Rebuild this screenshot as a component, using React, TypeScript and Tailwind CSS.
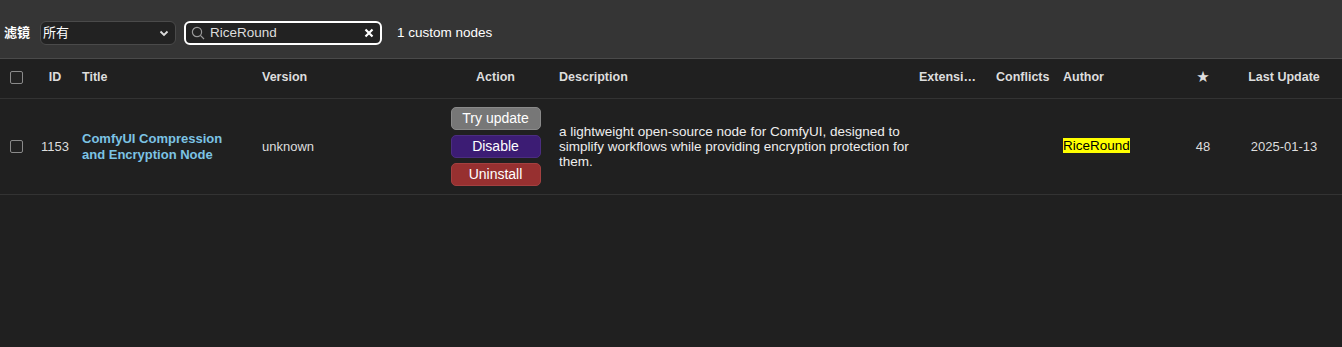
type NodeRow = {
  id: number
  title: string
  version: string
  description: string
  author: string
  stars: number
  lastUpdate: string
}

const ROWS: NodeRow[] = [
  {
    id: 1153,
    title: 'ComfyUI Compression and Encryption Node',
    version: 'unknown',
    description:
      'a lightweight open-source node for ComfyUI, designed to simplify workflows while providing encryption protection for them.',
    author: 'RiceRound',
    stars: 48,
    lastUpdate: '2025-01-13',
  },
]

const COLS =
  'grid grid-cols-[32px_46px_180px_178px_119px_360px_77px_67px_111px_66px_96px_1fr]'

function Checkbox() {
  return <span className="block h-[13px] w-[13px] rounded-[2px] border border-[#8a8a8a] bg-[#222]" />
}

export default function App() {
  return (
    <div
      className="h-[347px] w-full overflow-hidden bg-[#202020] text-[13px] text-[#ddd]"
      style={{ fontFamily: '"Liberation Sans", Arial, "Noto Sans CJK SC", sans-serif' }}
    >
      {/* toolbar */}
      <div className="flex h-[59px] items-center border-b border-[#4a4a4a] bg-[#353535] pl-1 pt-[8px]">
        <span className="font-bold text-white">滤镜</span>
        <div className="ml-[10px] flex h-[24px] w-[136px] items-center justify-between rounded-[6px] border border-[#4a4a4a] bg-[#222] pl-[2px] pr-[6px] text-white">
          <span>所有</span>
          <svg width="10" height="10" viewBox="0 0 10 10" fill="none" stroke="#ddd" strokeWidth="1.8">
            <path d="M1.5 3.5 5 7l3.5-3.5" />
          </svg>
        </div>
        <div className="ml-[8px] flex h-[24px] w-[198px] items-center rounded-[6px] border-2 border-white bg-[#222] pl-[5px] pr-[6px]">
          <svg width="14" height="14" viewBox="0 0 14 14" fill="none" stroke="#999" strokeWidth="1.2">
            <circle cx="6" cy="6" r="4.6" />
            <path d="M9.4 9.4 13 13" />
          </svg>
          <span className="ml-[5px] flex-1 text-[13.5px] text-[#ddd]">RiceRound</span>
          <svg width="10" height="10" viewBox="0 0 10 10" fill="none" stroke="#fff" strokeWidth="2.2">
            <path d="M1.5 1.5l7 7M8.5 1.5l-7 7" />
          </svg>
        </div>
        <span className="ml-[15px] text-[13.5px] text-white">1 custom nodes</span>
      </div>

      {/* header */}
      <div className={`${COLS} h-[40px] items-center border-b border-[#333] pb-[2px] text-[12.5px] font-bold text-[#ddd]`}>
        <div className="flex justify-center">
          <Checkbox />
        </div>
        <div className="text-center">ID</div>
        <div className="px-1">Title</div>
        <div className="px-1">Version</div>
        <div className="text-center">Action</div>
        <div className="px-1">Description</div>
        <div className="px-1 whitespace-nowrap">Extensi…</div>
        <div className="px-1">Conflicts</div>
        <div className="px-1">Author</div>
        <div className="text-center">★</div>
        <div className="text-center">Last Update</div>
        <div />
      </div>

      {/* rows */}
      {ROWS.map((row) => (
        <div key={row.id} className={`${COLS} items-center border-b border-[#333] py-[8px]`}>
          <div className="flex justify-center">
            <Checkbox />
          </div>
          <div className="text-center">{row.id}</div>
          <div className="max-w-[162px] px-1 font-bold leading-[16px] text-[#7cc3e4]">{row.title}</div>
          <div className="px-1">{row.version}</div>
          <div className="flex flex-col items-center gap-[5px] text-[14px] text-white">
            <button className="h-[23px] w-[90px] rounded-[5px] border border-[#8a8a8a] bg-[#777]">Try update</button>
            <button className="h-[23px] w-[90px] rounded-[5px] border border-[#4b2d80] bg-[#3c1c74]">Disable</button>
            <button className="h-[23px] w-[90px] rounded-[5px] border border-[#a34040] bg-[#973030]">Uninstall</button>
          </div>
          <div className="px-1 text-[13.5px] leading-[15px] text-[#eee]">{row.description}</div>
          <div />
          <div />
          <div className="px-1">
            <span className="bg-[#ffff00] text-[13.5px] text-black">{row.author}</span>
          </div>
          <div className="text-center">{row.stars}</div>
          <div className="text-center">{row.lastUpdate}</div>
          <div />
        </div>
      ))}
    </div>
  )
}
